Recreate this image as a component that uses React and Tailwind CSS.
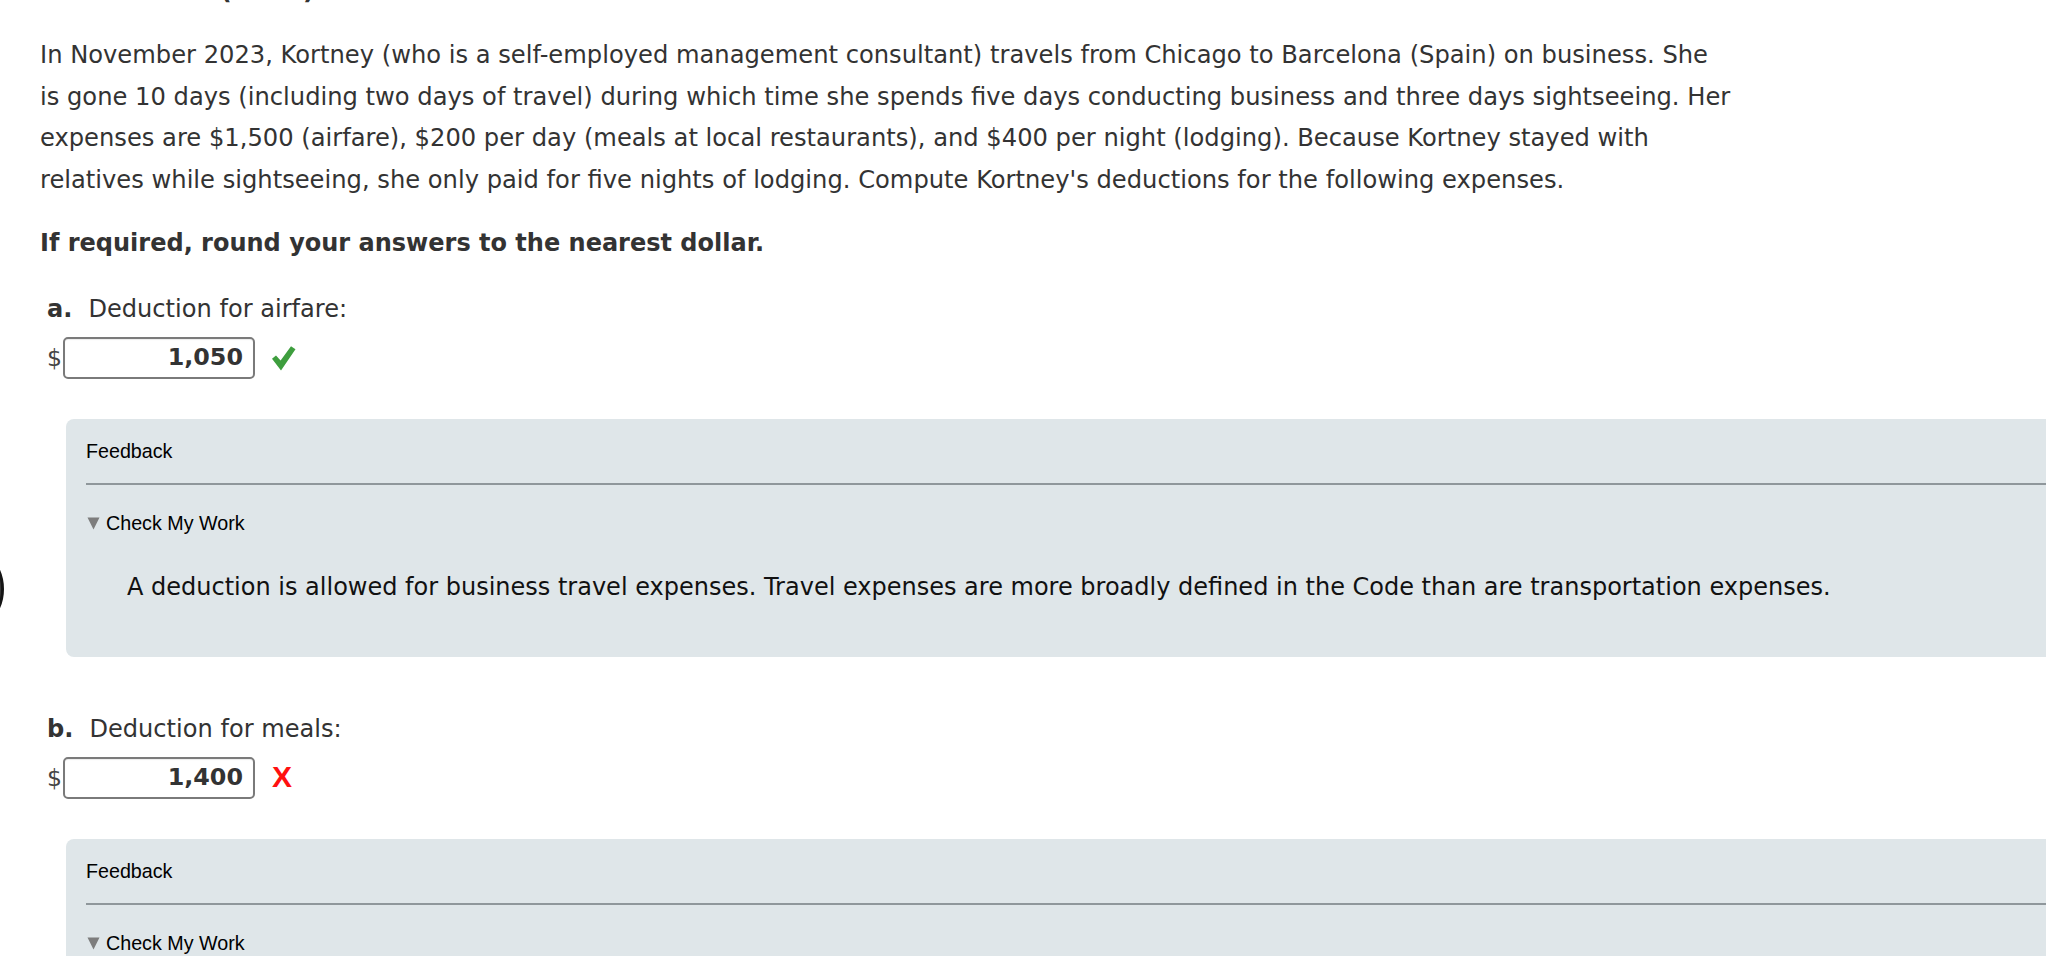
import React from "react";

const verdana = { fontFamily: '"DejaVu Sans", Verdana, sans-serif' };

function Check() {
  return (
    <svg width="24" height="25" viewBox="0 0 24 25" className="block">
      <polygon points="0,12.8 4,9.4 8.6,14.4 19,0.2 23.5,3.2 9,24.5" fill="#3e9e3e" />
    </svg>
  );
}

function Triangle() {
  return (
    <svg width="13" height="13" viewBox="0 0 13 13" className="block">
      <polygon points="0.5,0.5 12.5,0.5 6.5,12.5" fill="#7d7d7d" />
    </svg>
  );
}

function AnswerRow({ label, letter, value, correct }) {
  return (
    <div className="pl-[7px]">
      <div className="text-[24.1px] leading-[30px] text-[#333]">
        <span className="font-bold">{letter}.</span>
        <span className="ml-[16px]">{label}</span>
      </div>
      <div className="mt-[13px] flex items-center h-[42px]">
        <span className="text-[23.5px] text-[#444] leading-none">$</span>
        <div className="ml-[1px] w-[192px] h-[42px] border-2 border-[#7a7a7a] rounded-[5px] bg-white flex items-center justify-end pr-[10px] shadow-[inset_0_1px_1px_rgba(0,0,0,0.08)]">
          <span className="text-[23.8px] font-bold text-[#333] leading-none">{value}</span>
        </div>
        <div className="ml-[17px]">
          {correct ? (
            <Check />
          ) : (
            <span
              className="text-[30px] font-bold text-[#ff1010] leading-none"
              style={{ fontFamily: '"Liberation Sans", Arial, sans-serif' }}
            >
              X
            </span>
          )}
        </div>
      </div>
    </div>
  );
}

function FeedbackBox({ text, withCircle }) {
  return (
    <div className="relative ml-[26px] mr-[-80px] mt-[40px] bg-[#dfe6e9] rounded-[8px] pt-[21px] pl-[20px] pb-[55px]">
      {withCircle && (
        <div className="absolute left-[-156px] top-[123px] w-[94px] h-[94px] rounded-full bg-[#3b3b3b] border-[3px] border-[#151515]" />
      )}
      <div
        className="text-[19.7px] leading-[22px] text-black"
        style={{ fontFamily: '"Liberation Sans", Arial, Helvetica, sans-serif' }}
      >
        Feedback
      </div>
      <div className="mt-[21px] h-[2px] bg-[#8f979b]" />
      <div
        className="mt-[27px] flex items-center gap-[6px] text-[19.7px] leading-[22px] text-black"
        style={{ fontFamily: '"Liberation Sans", Arial, Helvetica, sans-serif' }}
      >
        <span className="ml-[1px]">
          <Triangle />
        </span>
        <span>Check My Work</span>
      </div>
      {text && (
        <p className="mt-[38px] pl-[41px] text-[24px] leading-[30px] text-[#111]" style={verdana}>
          {text}
        </p>
      )}
    </div>
  );
}

export default function App() {
  const lines = [
    "In November 2023, Kortney (who is a self-employed management consultant) travels from Chicago to Barcelona (Spain) on business. She",
    "is gone 10 days (including two days of travel) during which time she spends five days conducting business and three days sightseeing. Her",
    "expenses are $1,500 (airfare), $200 per day (meals at local restaurants), and $400 per night (lodging). Because Kortney stayed with",
    "relatives while sightseeing, she only paid for five nights of lodging. Compute Kortney's deductions for the following expenses.",
  ];
  return (
    <div className="w-full h-screen overflow-hidden bg-white" style={verdana}>
      <div className="pl-[40px]">
        <h2 className="mt-[-24px] text-[25px] leading-[30px] font-bold text-[#333] whitespace-nowrap">
          Exercise 9-6 (LO. 5)
        </h2>
        <div className="mt-[29px] text-[24.2px] leading-[41.67px] text-[#333]">
          {lines.map((l, i) => (
            <div key={i} className="whitespace-nowrap">
              {l}
            </div>
          ))}
        </div>
        <div className="mt-[21px] text-[24px] leading-[41.67px] font-bold text-[#333] whitespace-nowrap">
          If required, round your answers to the nearest dollar.
        </div>

        <div className="mt-[30px]">
          <AnswerRow letter="a" label="Deduction for airfare:" value="1,050" correct />
          <FeedbackBox
            withCircle
            text="A deduction is allowed for business travel expenses. Travel expenses are more broadly defined in the Code than are transportation expenses."
          />
        </div>

        <div className="mt-[57px]">
          <AnswerRow letter="b" label="Deduction for meals:" value="1,400" correct={false} />
          <FeedbackBox text="The cost of meals is deductible at 50 percent for business days." />
        </div>
      </div>
    </div>
  );
}
